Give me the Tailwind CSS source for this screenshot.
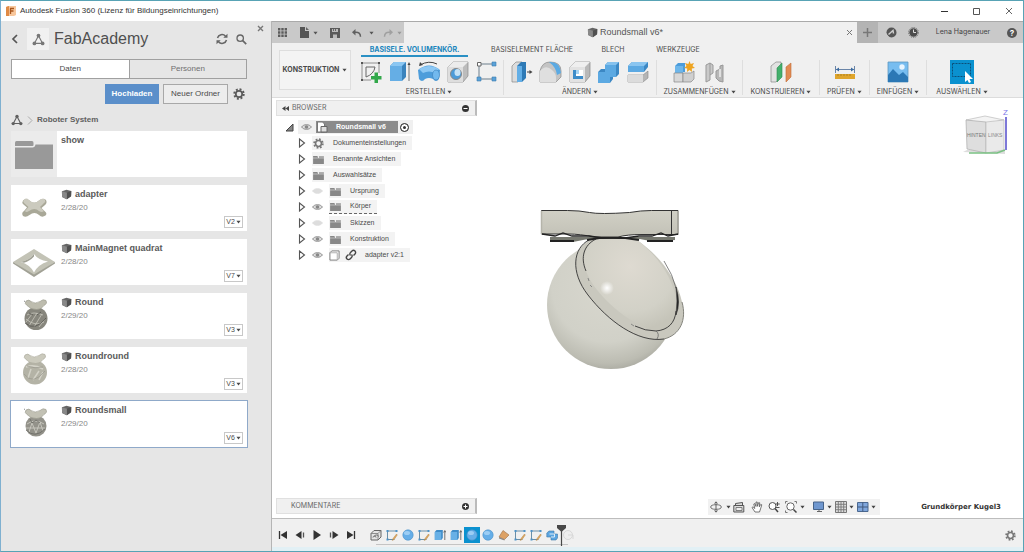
<!DOCTYPE html>
<html lang="de">
<head>
  <meta charset="UTF-8" />
  <meta name="viewport" content="width=device-width, initial-scale=1.0" />
  <title>Autodesk Fusion 360</title>
  <script src="https://cdn.jsdelivr.net/npm/@tailwindcss/browser@4"></script>
</head>
<body class="h-screen flex flex-col overflow-hidden bg-white border border-[#58a3b5] border-l-[#7fb0d0] text-[#4a4a4a] font-['Liberation_Sans',Arial,sans-serif]">

  <!-- Shared icons -->
  <svg class="hidden">
    <symbol id="cube" viewBox="0 0 12 12">
      <path d="M1 2.5 6 .8l5.2 1.4L11 8l-5 3.3L1.2 8.600z" fill="#666" />
      <path d="M1 2.500 6.500 4v7.200L1.200 8.600z" fill="#888" />
      <path d="M6.500 4l4.700-1.800L11 8l-4.500 3.200z" fill="#505050" />
    </symbol>
    <symbol id="folder" viewBox="0 0 12 10">
      <path d="M0 1h4.500l1 1.200V3H0zM0 3.500h12V10H0z" fill="#888" />
      <path d="M6.500 1.500H12V3H6.500z" fill="#888" />
    </symbol>
    <symbol id="eye" viewBox="0 0 12 8">
      <path d="M.6 4C3 .6 9 .6 11.400 4 9 7.400 3 7.400.6 4z" fill="#ddd" stroke="currentColor" />
      <circle cx="6" cy="4" r="2" fill="currentColor" />
    </symbol>
    <symbol id="gear" viewBox="0 0 12 12">
      <circle cx="6" cy="6" r="4.700" fill="none" stroke="currentColor" stroke-width="2" stroke-dasharray="1.900 1.790" />
      <circle cx="6" cy="6" r="3.200" fill="none" stroke="currentColor" stroke-width="1.700" />
    </symbol>
    <symbol id="caret" viewBox="0 0 6 4"><path d="M.5.5h5L3 3.800z" fill="currentColor" /></symbol>
    <symbol id="triangle" viewBox="0 0 12 12">
      <path d="M6 2.500 2.300 9.500h7.400z" fill="none" stroke="currentColor" stroke-width="1.100" />
      <circle cx="6" cy="2.400" r="1.700" fill="currentColor" /><circle cx="2.200" cy="9.600" r="1.700" fill="currentColor" /><circle cx="9.800" cy="9.600" r="1.700" fill="currentColor" />
    </symbol>
    <symbol id="expand" viewBox="0 0 8 10"><path d="M1.500 1v8l5-4z" fill="#fff" stroke="#555" stroke-width="1.100" /></symbol>
    <symbol id="tl-sketch" viewBox="0 0 12 12">
      <path d="M1.500 2h9M1.500 2v8.500h7" fill="none" stroke="#6a8fa8" />
      <path d="M.5 1h2v2h-2zM9.500 1h2v2h-2zM.5 9.500h2v2h-2z" fill="#4d92c8" />
      <path d="M10.500 5 7 9.500l-.7 2 1.800-1 3.200-4.500z" fill="#e0a860" stroke="#a87838" stroke-width=".4" />
    </symbol>
    <symbol id="tl-sphere" viewBox="0 0 12 12">
      <circle cx="6" cy="6" r="5.200" fill="#65aee8" stroke="#4a90c8" stroke-width=".6" />
      <ellipse cx="5" cy="4" rx="3" ry="2" fill="#9bcdf4" />
    </symbol>
    <symbol id="tl-extrude" viewBox="0 0 12 12">
      <path d="M.8 3 2.500 1h6.300v8l-1.600 2H.8z" fill="#3f8cc8" />
      <path d="M.8 3h6.400v8H.8z" fill="#68b0e6" />
      <path d="M10.800 11V2M9.700 3.500l1.100-2 1.100 2" stroke="#555" stroke-width=".8" fill="none" />
    </symbol>
    <symbol id="tl-component" viewBox="0 0 12 12">
      <path d="M1 4.500 4 1.500h7v6.500l-3 3H1z" fill="#e4e4e4" stroke="#666" />
      <path d="M1 4.500h7v6.500M8 4.500l3-3" fill="none" stroke="#777" stroke-width=".8" />
      <path d="M3 8.500c0-2 3-2 3 0M4.500 7.500c0-2 4-2 4 0" stroke="#666" fill="none" />
    </symbol>
    <symbol id="tl-plane" viewBox="0 0 12 12">
      <path d="M1 8 5 1.500l6 4.500-4.500 4.500z" fill="#dda266" stroke="#a87d54" stroke-width=".7" />
      <path d="M1 8v1.500l5.500 2V10.500z" fill="#888" />
    </symbol>
    <symbol id="tl-combine" viewBox="0 0 12 12">
      <path d="M.8 4 3 2h5v3h3.500v4L10 11H5V8H.8z" fill="#5ba5e0" stroke="#4078a8" stroke-width=".6" />
      <path d="M3.500 5h5v3H5" fill="none" stroke="#dcecf8" />
    </symbol>
    <symbol id="tl-ghost" viewBox="0 0 12 12"><circle cx="6" cy="6" r="4.500" fill="#eee" stroke="#d2d2d2" stroke-width=".8" /><path d="M6 6h5v4" stroke="#d8d8d8" fill="none" /></symbol>

    <!-- Part thumbnails -->
    <symbol id="part-adapter" viewBox="0 0 46 46">
      <path d="M12 15.500q3-3 6.500 0 4.500 4.500 9.500 0 4-3 7-.5 1.500 3-1 5l-3.500 3 3.500 3.500q2.500 2 .5 4-3.500 2.500-6.500-.5-4.500-4-9.500 0-3.500 3-6.500 1-2-3 1-5l3-3.500-3.500-3q-2-2-.5-4z" fill="#a9a898" />
      <path d="M13 14.500q2.500-2 5 .5 5.500 5 10.500 0 3-2 5.500-.5 1 2-1.500 4L29 22l4 4q-2 2-5 0-4.500-4-10 0-3 2-4 0l3.500-4-4.500-4q-1.500-1.500 0-3.500z" fill="#cbcabe" />
    </symbol>
    <symbol id="part-magnet" viewBox="0 0 46 46">
      <path d="M2 23 23 10l21 13-21 14zM9.500 23Q19 25.500 23 33.500 27 25.500 37 22.500 27 21 23 15 19 21 9.500 23z" fill="#c3c3b6" fill-rule="evenodd" />
      <path d="M2 23v1.500L23 38l21-13.500V23L23 35.500z" fill="#a1a195" />
      <path d="M9.500 23Q19 21 23 15v2.500Q19 22 13 23.700z" fill="#a0a094" />
    </symbol>
    <symbol id="part-round" viewBox="0 0 46 46">
      <circle cx="25" cy="25.500" r="11.500" fill="#87867d" />
      <path d="M15 8q3-2 5 .5 4 3 9 0 3-3 6-1 2 3-2 5l-3 3q-4 2-10 0l-4-3q-3-2-1-4.500z" fill="#bdbcae" stroke="#99988b" stroke-width=".6" />
      <path d="M16 22q6-4 16 0M15 29l6-8M18 33l8-13M23 34l8-13M28 34l6-8M15 26q9 8 18 3" fill="none" stroke="#c6c5bb" stroke-width=".8" />
      <path d="M14 30q10 9 21-5M18 20l4 2m4 0 4-3" fill="none" stroke="#55544f" stroke-width=".8" />
      <path d="m13 8 1 .5" stroke="#888" />
    </symbol>
    <symbol id="part-roundround" viewBox="0 0 46 46">
      <circle cx="24" cy="25.500" r="12" fill="#b4b3a6" />
      <path d="M14 8q3-2 5 .5 4 3 9 0 3-3 6-1 2 3-2 5l-3 3q-4 2-10 0l-4-3q-3-2-1-4.500z" fill="#cbcabd" stroke="#a9a89b" stroke-width=".6" />
      <path d="M15 20q8-3 17 2M17 31l3-9M22 33l6-9M28 33l4-8" fill="none" stroke="#d3d2c7" stroke-width="1.500" />
      <path d="M13 27q9 12 21-3M16 19q8 3 16 1" fill="none" stroke="#98978c" stroke-width=".7" />
    </symbol>
    <symbol id="part-roundsmall" viewBox="0 0 46 46">
      <circle cx="25" cy="25" r="10.500" fill="#93928a" />
      <path d="M15 9q3-2 5 .5 4 3 9 0 3-3 6-1 2 3-2 5l-3 3q-4 2-10 0l-4-3q-3-2-1-4.500z" fill="#c2c1b4" stroke="#99988b" stroke-width=".6" />
      <path d="M16 23q8-6 17 0M18 31l3-9 4 10 4-11 3 9M15 27h19" fill="none" stroke="#cbcac1" stroke-width=".9" />
      <path d="M15 29q9 9 19-1M19 18l2 4 4-3 4 3" fill="none" stroke="#6a6963" stroke-width=".8" />
      <path d="m13 8 1 .5" stroke="#888" />
    </symbol>
  </svg>

  <!-- Title bar -->
  <header class="h-5 shrink-0 flex items-center pl-[5px] pr-2 bg-white text-[8px] text-[#333]">
    <svg class="size-[10px] mr-1" viewBox="0 0 10 10"><path d="M0 1 2 0h8v9l-2 1H0z" fill="#f8c79c" /><path d="M0 1 3 0v10H0z" fill="#e08a45" /><path d="M4 2.500h4M4.500 2.500V8M4.500 5h3" stroke="#a8561c" stroke-width="1.300" fill="none" /></svg>
    <h1 class="flex-1">Autodesk Fusion 360 (Lizenz für Bildungseinrichtungen)</h1>
    <div class="flex gap-6 mr-[2px]">
      <button aria-label="Minimieren"><svg class="size-2" viewBox="0 0 8 8"><path d="M0 4.500h7" stroke="#333" /></svg></button>
      <button aria-label="Maximieren"><svg class="size-2" viewBox="0 0 8 8"><path d="M.5 1.500h6v6h-6z" fill="none" stroke="#555" /></svg></button>
      <button aria-label="Schließen"><svg class="size-2" viewBox="0 0 8 8"><path d="m1 1 6 6m0-6L1 7" stroke="#555" stroke-width=".9" /></svg></button>
    </div>
  </header>

  <div class="flex-1 min-h-0 flex">

    <!-- Data panel -->
    <aside class="relative w-[271px] shrink-0 bg-[#e6e6e6] border-r border-[#b5b5b5] pl-[10px] pr-6 text-[8px]">
      <button aria-label="Datengruppe schließen" class="absolute right-[7px] top-[4px]"><svg class="size-[7px]" viewBox="0 0 7 7"><path d="m1 1 5 5m0-5L1 6" stroke="#777" stroke-width="1.400" /></svg></button>

      <div class="flex items-center h-8 pt-1">
        <button aria-label="Zurück"><svg class="w-2 h-[10px]" viewBox="0 0 8 10"><path d="M6 1 2 5l4 4" fill="none" stroke="#555" stroke-width="1.700" /></svg></button>
        <span class="ml-2 size-[22px] grid place-items-center bg-[#f1f1f1] text-[#777]"><svg class="size-[13px]"><use href="#triangle" /></svg></span>
        <h2 class="ml-[5px] flex-1 text-[16px] text-[#4f4f4f]">FabAcademy</h2>
        <button aria-label="Aktualisieren"><svg class="size-3" viewBox="0 0 12 12"><path d="M1.500 5a4.600 4.600 0 0 1 8-1.800M10.500 7a4.600 4.600 0 0 1-8 1.800" fill="none" stroke="#666" stroke-width="1.500" /><path d="M11.500.8v4H7.300zM.5 11.200v-4h4.200z" fill="#666" /></svg></button>
        <button aria-label="Suchen" class="ml-2"><svg class="size-[11px]" viewBox="0 0 11 11"><circle cx="4.200" cy="4.200" r="3.200" fill="none" stroke="#666" stroke-width="1.300" /><path d="m6.700 6.700 3.500 3.500" stroke="#666" stroke-width="1.700" /></svg></button>
      </div>

      <div class="mt-[6px] flex h-5 border border-[#a0a0a0]">
        <button class="flex-1 bg-white border-r border-[#a0a0a0]">Daten</button>
        <button class="flex-1 text-[#707070]">Personen</button>
      </div>

      <div class="mt-[5px] flex justify-end items-center h-5">
        <button class="h-5 w-[54px] bg-[#5b8fca] text-white font-bold">Hochladen</button>
        <button class="ml-1 h-5 w-[65px] border border-[#a8a8a8] bg-[#ededed]">Neuer Ordner</button>
        <button aria-label="Einstellungen" class="ml-[5px] mr-[2px]"><svg class="size-3 text-[#5a5a5a]"><use href="#gear" /></svg></button>
      </div>

      <nav class="mt-2 flex items-center h-4 gap-1 font-bold text-[#606060]">
        <svg class="size-[12px]"><use href="#triangle" /></svg>
        <svg class="w-[6px] h-[9px]" viewBox="0 0 6 9"><path d="m1 .5 4 4-4 4" fill="none" stroke="#aaa" /></svg>
        <a href="#">Roboter System</a>
      </nav>

      <ul id="fileList" class="mt-[3px] flex flex-col gap-2">
        <li class="h-[46px] flex bg-white">
          <span class="w-[46px] grid place-items-center bg-[#ebebeb]">
            <svg class="w-[38px] h-[29px]" viewBox="0 0 38 29"><path d="M0 5V2.500Q0 1 1.500 1H17q1.500 0 1.500 2v2q0 1-1 1H0z" fill="#999" /><path d="M0 7.500h17.500Q20 7.500 20.500 4.500H38V29H0z" fill="#999" /></svg>
          </span>
          <a href="#" class="pl-1 pt-[3px] text-[9px] font-bold text-[#5a5a5a]">show</a>
        </li>
      </ul>
    </aside>

    <main class="flex-1 min-w-0 flex flex-col">

      <!-- Document tabs -->
      <div class="h-[22px] shrink-0 flex bg-[#c9c9c9] border-t border-[#aaa] text-[#555]">
        <div class="w-[132px] flex items-center pl-[6px]">
          <button aria-label="Datengruppe"><svg class="size-[9px]" viewBox="0 0 9 9"><path d="M0 0h2.400v2.400H0zM3.300 0h2.400v2.400H3.300zM6.600 0H9v2.400H6.600zM0 3.300h2.400v2.400H0zM3.300 3.300h2.400v2.400H3.300zM6.600 3.300H9v2.400H6.600zM0 6.600h2.400V9H0zM3.300 6.600h2.400V9H3.300zM6.600 6.600H9V9H6.600z" fill="#5c5c5c" /></svg></button>
          <button aria-label="Datei" class="ml-[13px] flex items-center gap-1"><svg class="w-[9px] h-[11px]" viewBox="0 0 9 11"><path d="M0 0h5v4h4v7H0z" fill="#555" /><path d="M6 0l3 3H6z" fill="#666" /></svg><svg class="w-[5px] h-1"><use href="#caret" /></svg></button>
          <button aria-label="Speichern" class="ml-3"><svg class="size-[10px]" viewBox="0 0 10 10"><path d="M0 0h10v10H0z" fill="#5a5a5a" /><path d="M2 1h6v3H2zM3 6.500h4V10H3z" fill="#bbb" /><path d="M3.500 1v2M5.500 1v2" stroke="#666" /></svg></button>
          <button aria-label="Rückgängig" class="ml-3 flex items-center gap-[7px]"><svg class="w-[10px] h-[10px]" viewBox="0 0 10 10"><path d="M3.500 1v6.500L0 4.200z" fill="#606060" /><path d="M3 4.200q5.500-.5 5.500 4.500" fill="none" stroke="#606060" stroke-width="1.500" /></svg><svg class="w-[5px] h-1"><use href="#caret" /></svg></button>
          <button aria-label="Wiederherstellen" class="ml-[9px] flex items-center gap-1 text-[#999]"><svg class="w-[10px] h-[10px]" viewBox="0 0 10 10"><path d="M6.500 1v6.500L10 4.200z" fill="#a0a0a0" /><path d="M7 4.200q-5.500-.5-5.500 4.500" fill="none" stroke="#a0a0a0" stroke-width="1.500" /></svg><svg class="w-[5px] h-1"><use href="#caret" /></svg></button>
        </div>
        <div class="flex-1 flex items-center bg-[#f0f0f0] pr-1">
          <a href="#" class="flex-1 flex items-center justify-center gap-[2px] text-[9px]"><svg class="size-[11px]"><use href="#cube" /></svg>Roundsmall v6*</a>
          <button aria-label="Tab schließen"><svg class="size-[7px]" viewBox="0 0 7 7"><path d="m1 1 5 5m0-5L1 6" stroke="#777" /></svg></button>
        </div>
        <button aria-label="Neuer Tab" class="w-[21px] grid place-items-center bg-[#b4b4b4]"><svg class="size-[9px]" viewBox="0 0 9 9"><path d="M4.500 0v9M0 4.500h9" stroke="#777" stroke-width="1.500" /></svg></button>
        <div class="w-[145px] flex items-center pl-2 pr-[6px] font-['Inter',sans-serif] text-[7px] text-[#444]">
          <button aria-label="Erweiterungen"><svg class="size-[11px]" viewBox="0 0 11 11"><circle cx="5.500" cy="5.500" r="5" fill="#555" /><path d="M2.500 7.500 7 3.500l.5 3" stroke="#ccc" stroke-width="1.500" fill="none" /><path d="m0 6 3 4-3 1z" fill="#c9c9c9" /></svg></button>
          <button aria-label="Auftragsstatus" class="ml-[11px]"><svg class="size-[11px]" viewBox="0 0 11 11"><circle cx="5.500" cy="5.500" r="4.200" fill="#4c4c4c" /><circle cx="5.500" cy="5.500" r="5" fill="none" stroke="#666" stroke-dasharray="1.300 1" stroke-width=".8" /><path d="M5.500 2.500v3H8" stroke="#ddd" fill="none" /></svg></button>
          <button class="flex-1 text-center">Lena Hagenauer</button>
          <button aria-label="Hilfe" class="size-[10px] rounded-full bg-[#555] text-white font-bold text-[8px] leading-[10px]">?</button>
        </div>
      </div>

      <!-- Ribbon -->
      <div class="h-[55px] shrink-0 flex bg-[#f0f0f0] border-b border-[#dcdcdc] font-['Inter',sans-serif] text-[7px]">
        <div class="w-[83px] pl-[7px] pt-[7px]">
          <button class="w-[72px] h-10 flex items-center justify-center gap-[3px] border border-[#dedede] bg-[#f4f4f4] font-bold">KONSTRUKTION<svg class="w-[5px] h-1"><use href="#caret" /></svg></button>
        </div>
        <div class="flex-1 min-w-0 flex flex-col">
          <nav class="flex h-[14px] pl-[6px] items-stretch text-center leading-[14px]">
            <a href="#" class="w-[107px] border-b-2 border-[#2a90c4] text-[#1c86bd] font-bold">BASISELE. VOLUMENKÖR.</a>
            <a href="#" class="w-32">BASISELEMENT FLÄCHE</a>
            <a href="#" class="w-[34px]">BLECH</a>
            <a href="#" class="w-24">WERKZEUGE</a>
          </nav>
          <div class="flex-1 flex pt-[3px] pb-[2px]">
            <div class="w-[149px] flex flex-col items-center justify-between border-r border-[#dedede]">
              <div class="flex gap-[5px]">
                <button aria-label="Skizze erstellen"><svg class="size-6" viewBox="0 0 24 24"><path d="M2 3h18M3 2v18h9M20 2v11" fill="none" stroke="#777" stroke-width=".8" /><path d="M7 7v10M7 7h9M16 7q-1 7-9 10" fill="none" stroke="#666" /><path d="M2 2h2v2H2zM19 2h2v2h-2zM2 19h2v2H2z" fill="#555" /><path d="M15.500 12.500h3.500V16h3.500v3.500H19V23h-3.500v-3.500H12V16h3.500z" fill="#32a84a" /></svg></button>
                <button aria-label="Extrusion"><svg class="size-6" viewBox="0 0 24 24"><path d="m2 6 4-4h12v15l-4 4H2z" fill="#3a83bd" /><path d="M2 6h12v15H2z" fill="#65aee5" /><path d="m2 6 4-4h12l-4 4z" fill="#8ac6f2" /><path d="M21 21V4" stroke="#777" /><path d="m21 2 1.500 3h-3z" fill="#444" /></svg></button>
                <button aria-label="Drehen"><svg class="size-6" viewBox="0 0 24 24"><path d="M1 10Q12 1 23 10l-1 9q-3 4-6 0-4-2-8 0-3 4-6 0z" fill="#4d9ddb" /><path d="M2 9Q12 3 22 9l-4 4q-6-3-12 0z" fill="#8dc8f4" /><ellipse cx="19" cy="15" rx="3.500" ry="5" fill="#72b9ee" stroke="#3d80b8" stroke-width=".6" /><path d="M3 5q9-5 17-1" fill="none" stroke="#444" /><path d="m2 6 1-4 3 3z" fill="#444" /></svg></button>
                <button aria-label="Bohrung"><svg class="size-6" viewBox="0 0 24 24"><path d="m2 7 5-5h15v14l-5 6H2z" fill="#bcbcbc" stroke="#8a8a8a" stroke-width=".7" /><path d="M2 7h15v15H2z" fill="#dedede" /><path d="m2 7 5-5h15l-5 5z" fill="#ececec" /><circle cx="10" cy="14" r="5.500" fill="#4d9bd8" stroke="#888" /><ellipse cx="11.500" cy="12.500" rx="3" ry="3.500" fill="#c5e2f6" /></svg></button>
                <button aria-label="Muster"><svg class="size-6" viewBox="0 0 24 24"><path d="M4 4h15M4 4v15h15" fill="none" stroke="#6d7f8c" /><path d="M2.500 2.500H6V6H2.500z" fill="#fff" stroke="#666" /><path d="M17 2h4v4h-4zM2 17h4v4H2zM17 17h4v4h-4z" fill="#5aa2d8" stroke="#3c7cae" stroke-width=".6" /></svg></button>
              </div>
              <button class="flex items-center gap-[2px] leading-none">ERSTELLEN<svg class="w-[5px] h-1"><use href="#caret" /></svg></button>
            </div>
            <div class="w-[153px] flex flex-col items-center justify-between border-r border-[#dedede]">
              <div class="flex gap-[5px]">
                <button aria-label="Drücken/Ziehen"><svg class="size-6" viewBox="0 0 24 24"><path d="m2 6 4-4h6v16l-4 4H2z" fill="#dcdcdc" stroke="#888" stroke-width=".7" /><path d="M7 6l4-4h5v16l-4 4H7z" fill="#2e7ab6" /><path d="M7 6h5v16H7z" fill="#62aee6" /><path d="M17 12h3" stroke="#444" /><path d="m22.500 12-3-2v4z" fill="#444" /></svg></button>
                <button aria-label="Abrunden"><svg class="size-6" viewBox="0 0 24 24"><path d="M1 21V11Q3 2 11 2q11 0 11 9v6l-5 5H1z" fill="#c4c4c4" stroke="#888" stroke-width=".7" /><path d="M1 22V11q6-7 12-1 4 3 4 8v4z" fill="#dfdfdf" /><path d="M10 2q11-1 12 11l-4 2q-1-8-8-13z" fill="#5baae3" /></svg></button>
                <button aria-label="Schale"><svg class="size-6" viewBox="0 0 24 24"><path d="m2 7 5-5h15v14l-5 6H2z" fill="#b9b9b9" stroke="#888" stroke-width=".7" /><path d="M2 7h15v15H2z" fill="#e2e2e2" /><path d="m2 7 5-5h15l-5 5z" fill="#efefef" /><path d="M5 10h10v9H5z" fill="#fff" /><path d="M5 10h3v6h7v3H5z" fill="#3c8cc9" /><path d="M8 10h3v4H8z" fill="#a5d3f3" /></svg></button>
                <button aria-label="Kombinieren"><svg class="size-6" viewBox="0 0 24 24"><path d="m8 5 3-3h11v12l-3 3h-3v2l-3 4H1V12l3-3h4z" fill="#3c88c4" /><path d="M8 5h11v12h-6v6H1V12h7z" fill="#5ca9e2" /><path d="m8 5 3-3h11l-3 3z" fill="#86c2ee" /></svg></button>
                <button aria-label="Fläche versetzen"><svg class="size-6" viewBox="0 0 24 24"><path d="m2 6 4-4h16v5l-4 5H2z" fill="#3c88c4" /><path d="M2 6h16v6H2z" fill="#5ca9e2" /><path d="m2 6 4-4h16l-4 4z" fill="#8ac5f0" /><path d="M2 15h15l5-4v7l-5 4H2z" fill="#b5b5b5" stroke="#888" stroke-width=".6" /><path d="M2 15h15v7H2z" fill="#dcdcdc" /></svg></button>
              </div>
              <button class="flex items-center gap-[2px] leading-none">ÄNDERN<svg class="w-[5px] h-1"><use href="#caret" /></svg></button>
            </div>
            <div class="w-[86px] flex flex-col items-center justify-between border-r border-[#dedede]">
              <div class="flex gap-[7px]">
                <button aria-label="Neue Komponente"><svg class="size-6" viewBox="0 0 24 24"><path d="m3 6 3-3h7v9H3z" fill="#4b9cdb" /><path d="M3 6h8v7H3z" fill="#6db6ea" /><path d="M2 13h9v9H2z" fill="#d8d8d8" stroke="#888" stroke-width=".7" /><path d="M11 13h8l3-2v8l-3 3h-8z" fill="#cfcfcf" stroke="#888" stroke-width=".7" /><path d="m17.500 1 1.200 3 3.300-1-1.500 3 2.500 2-3.200.5.200 3.500-2.500-2-2.500 2 .2-3.500L12 8l2.500-2L13 3l3.300 1z" fill="#eea421" /></svg></button>
                <button aria-label="Verbindung"><svg class="size-6" viewBox="0 0 24 24"><path d="M3 5l4-2 3 2v8l-3 2v5l-4 2z" fill="#c9c9c9" stroke="#999" /><path d="M7 3v12" stroke="#999" /><path d="M20 5v17l-4-1-3-3v-7l4-2V6z" fill="#b7b7b7" stroke="#999" /><path d="M17 9v8" stroke="#eee" stroke-width="1.500" /></svg></button>
              </div>
              <button class="flex items-center gap-[2px] leading-none">ZUSAMMENFÜGEN<svg class="w-[5px] h-1"><use href="#caret" /></svg></button>
            </div>
            <div class="w-[77px] flex flex-col items-center justify-between border-r border-[#dedede]">
              <button aria-label="Versatzebene"><svg class="size-6" viewBox="0 0 24 24"><path d="m2 6 5-4h5v15l-5 5H2z" fill="#e2e2e2" stroke="#888" stroke-width=".7" /><path d="m8 8 5-5v14l-5 5z" fill="#43b06c" stroke="#2f8a50" stroke-width=".6" /><path d="m17 7 5-4v14l-5 5z" fill="#e28a53" stroke="#c06c38" stroke-width=".6" /></svg></button>
              <button class="flex items-center gap-[2px] leading-none">KONSTRUIEREN<svg class="w-[5px] h-1"><use href="#caret" /></svg></button>
            </div>
            <div class="w-[50px] flex flex-col items-center justify-between border-r border-[#dedede]">
              <button aria-label="Messen"><svg class="size-6" viewBox="0 0 24 24"><path d="M2.500 6v7M21.500 6v7M3 9.500h18" stroke="#6a85a8" /><path d="m3 9.500 3-2v4zM21 9.500l-3-2v4z" fill="#3c6ba0" /><path d="M2 14h20v5H2z" fill="#dfa52c" /><path d="M5 14v2M8 14v2M11 14v2M14 14v2M17 14v2" stroke="#99701b" stroke-width=".7" /></svg></button>
              <button class="flex items-center gap-[2px] leading-none">PRÜFEN<svg class="w-[5px] h-1"><use href="#caret" /></svg></button>
            </div>
            <div class="w-[57px] flex flex-col items-center justify-between border-r border-[#dedede]">
              <button aria-label="Bild einfügen"><svg class="size-6" viewBox="0 0 24 24"><path d="M2 2h20v20H2z" fill="#77bdf0" stroke="#5e97bf" stroke-width=".8" /><path d="m2 15 5-6 6 6 4-3 5 5v5H2z" fill="#2c78b5" /><circle cx="16" cy="7" r="2.700" fill="#e8f5ff" /></svg></button>
              <button class="flex items-center gap-[2px] leading-none">EINFÜGEN<svg class="w-[5px] h-1"><use href="#caret" /></svg></button>
            </div>
            <div class="w-[70px] flex flex-col items-center justify-between">
              <button aria-label="Auswählen"><svg class="size-6" viewBox="0 0 24 24"><path d="M0 0h24v24H0z" fill="#0a91cf" /><path d="M2.500 3.500h18v13h-18z" fill="none" stroke="#0b4f78" stroke-dasharray="2 1" /><path d="M15 11v11l2.500-2 1.500 3 2-1-1.500-3H23z" fill="#fff" /></svg></button>
              <button class="flex items-center gap-[2px] leading-none">AUSWÄHLEN<svg class="w-[5px] h-1"><use href="#caret" /></svg></button>
            </div>
          </div>
        </div>
      </div>

      <!-- Canvas -->
      <section class="flex-1 min-h-0 relative bg-white">
        <svg class="absolute left-[258px] top-[102px] w-[170px] h-[180px]" viewBox="0 0 170 180">
          <defs>
            <radialGradient id="ball" cx=".47" cy=".36" r=".66"><stop offset="0" stop-color="#d8d7ce" /><stop offset=".65" stop-color="#d1d1c8" /><stop offset=".9" stop-color="#bcbcb2" /><stop offset="1" stop-color="#aaaaa1" /></radialGradient>
            <radialGradient id="cap" cx=".5" cy=".3" r=".7"><stop offset="0" stop-color="#dedad1" /><stop offset=".7" stop-color="#d2d1c7" /><stop offset="1" stop-color="#c5c4b9" /></radialGradient>
            <radialGradient id="shine"><stop offset="0" stop-color="#fff" /><stop offset="1" stop-color="#fff" stop-opacity="0" /></radialGradient>
            <linearGradient id="plate" x1="0" x2="0" y1="0" y2="1"><stop offset="0" stop-color="#d1d0c6" /><stop offset="1" stop-color="#c2c1b6" /></linearGradient>
          </defs>
          <circle cx="81" cy="105" r="64" fill="url(#ball)" />
          <path d="M60 40C43 48 40 72 58 95c20 26 50 48 76 44 16-4 23-19 18-37-4-20-20-45-45-62z" fill="#c9c8be" />
          <path d="M66 39c-14 7-16 25-4 44 12 18 38 42 64 48 16-1 22-14 20-31-3-22-18-44-40-61z" fill="url(#cap)" />
          <path d="M59 40C43 48 40 72 58 95c20 26 50 48 76 44" fill="none" stroke="#333" stroke-width=".9" />
          <path d="M134 139c16-4 23-19 18-37" fill="none" stroke="#77776f" stroke-width=".9" />
          <path d="M66 39c-12 6-16 18-10 32M105 126q10 5 21 5c12-1 19-8 20-20" fill="none" stroke="#333" stroke-width=".9" />
          <path d="M126 131q4 3 1 8M134 61q9 14 12 27" fill="none" stroke="#666" stroke-width=".8" />
          <path d="M146 87q2 14 0 28 5-12 0-28z" fill="#222" stroke="#333" stroke-width=".7" />
          <path d="m58 78 1 3m1 4 2 2m39 37 3 2" stroke="#777" stroke-width=".8" />
          <circle cx="77" cy="88" r="7" fill="url(#shine)" />
          <path d="M20 37h125v3l-20 2-15-3H58l-15 3-23-1z" fill="#777970" />
          <path d="M20 41h24M117 41h26M57 40q24-5 52 0" stroke="#222" stroke-width="2" fill="none" />
          <path d="M11.500 10.500h26q12 0 22 2t40 0q11-2 22-2h26.500v24H112q-15 0-24 2.500H65q-16-3-26-3H11.500z" fill="url(#plate)" stroke="#333" />
          <path d="M11.500 11v23M148 11v23" stroke="#b5b4aa" stroke-width="1.500" />
          <path d="M141.500 11v23" stroke="#333" />
          <path d="m12 34 13 2 8-3 9 3 17 0 14 2h22l14-2 13 0 9-3 7 3 10-2" fill="none" stroke="#222" stroke-width="1.300" />
        </svg>

        <!-- View cube -->
        <svg class="absolute right-[8px] top-[6px] w-14 h-[52px]" viewBox="0 0 56 52">
          <path d="M4 48l42 2V46H8z" fill="#ddd" />
          <path d="M7 16 26 12l19 4-19 4z" fill="#f4f4f4" stroke="#bbb" stroke-width=".7" />
          <path d="M7 16 27 18v31L8 45z" fill="#dedede" stroke="#aaa" stroke-width=".7" />
          <path d="M27 18 45 16v30l-18 3z" fill="#eaeaea" stroke="#bbb" stroke-width=".7" />
          <path d="M10 49h28l8-3" stroke="#79c183" fill="none" stroke-width="1.500" />
          <path d="M47 13v33" stroke="#7d78d8" stroke-width="2" />
          <text x="8" y="33" font-size="5" fill="#777" font-family="Liberation Sans">HINTEN</text>
          <text x="29" y="33" font-size="5" fill="#888" font-family="Liberation Sans">LINKS</text>
          <text x="44" y="11" font-size="8" fill="#7d78e8" font-family="Liberation Sans">Z</text>
        </svg>

        <!-- Browser -->
        <div class="absolute left-1 top-[2px] w-[201px] text-[7px]">
          <div class="h-4 flex items-center bg-[#f0f0f0] border border-[#e0e0e0] border-r-2 border-r-[#bbb] pl-[5px] font-['Inter',sans-serif] text-[#666]">
            <svg class="w-[7px] h-[5px] mr-[2px]" viewBox="0 0 7 5"><path d="M3.500 0v5L0 2.500zM7 0v5L3.500 2.500z" fill="#444" /></svg>
            <h2 class="flex-1 pl-[1px]">BROWSER</h2>
            <button aria-label="Browser minimieren"><svg class="size-[7px] mr-[6px]" viewBox="0 0 7 7"><circle cx="3.500" cy="3.500" r="3.500" fill="#333" /><path d="M1.500 3.500h4" stroke="#fff" /></svg></button>
          </div>
          <ul id="browserTree" class="pt-[3px]">
            <li class="h-4 flex items-center pl-[9px]">
              <svg class="size-[9px] mr-1" viewBox="0 0 9 9"><path d="M8 1v7H1z" fill="#888" stroke="#444" /></svg>
              <span class="h-[14px] flex items-center bg-[#f0f0f0] pl-[3px] text-[#888]">
                <svg class="w-[11px] h-2 mr-1"><use href="#eye" /></svg>
                <span class="h-3 w-[82px] flex items-center bg-[#8b8b8b] text-white font-bold">
                  <svg class="size-3 mr-2" viewBox="0 0 12 12"><path d="M1.500 1h5l2 2v8h-7z" fill="#fff" stroke="#777" /><path d="M5 5.500h6V11H5z" fill="#ddd" stroke="#666" /></svg>Roundsmall v6</span>
                <label class="ml-[2px] mr-1 flex"><input type="radio" name="active" checked aria-label="Komponente aktivieren" class="size-[9px] appearance-none rounded-full border border-[#444] bg-white checked:bg-[#333] checked:border-[#444] checked:shadow-[inset_0_0_0_2px_white]" /></label>
              </span>
            </li>
          </ul>
        </div>

        <!-- Comments -->
        <div class="absolute left-1 bottom-1 w-[201px] h-4 flex items-center bg-[#f0f0f0] border border-[#e0e0e0] border-r-2 border-r-[#bbb] pl-[14px] font-['Inter',sans-serif] text-[7px] text-[#666]">
          <h2 class="flex-1">KOMMENTARE</h2>
          <button aria-label="Kommentare öffnen"><svg class="size-[7px] mr-[6px]" viewBox="0 0 7 7"><circle cx="3.500" cy="3.500" r="3.500" fill="#333" /><path d="M1.500 3.500h4M3.500 1.500v4" stroke="#fff" /></svg></button>
        </div>

        <!-- Navigation bar -->
        <div class="absolute right-[143px] bottom-[3px] w-[172px] h-4 flex items-center bg-[#f1f1f1] pl-[2px] text-[#444]">
          <button aria-label="Orbit" class="flex items-center gap-1"><svg class="size-3" viewBox="0 0 12 12"><ellipse cx="6" cy="6" rx="5.300" ry="2.300" fill="none" stroke="#666" stroke-width=".9" /><path d="M6 1v10M4.500 2.500 6 .8l1.500 1.700M4.500 9.500 6 11.200l1.500-1.700" stroke="#555" fill="none" stroke-width=".9" /></svg><svg class="w-[5px] h-1"><use href="#caret" /></svg></button>
          <button aria-label="Ausrichten" class="ml-[2px]"><svg class="size-3" viewBox="0 0 12 12"><path d="M.8 4.500h10v6.500H.8zM2.500 4.500v-2l7-1v3" fill="#ddd" stroke="#555" /><path d="M3 6.500h6v3H3z" fill="#eee" stroke="#666" stroke-width=".8" /></svg></button>
          <button aria-label="Pan" class="ml-[6px]"><svg class="size-3" viewBox="0 0 12 12"><path d="M4 11 1 6.500l1-.7 1.800 1.700L2.800 3l1-.5L5 5.500V1h1.200l.3 4.300L7.700 1.500l1 .3-.4 4 1.500-2.500 1 .5L9.500 8 8.500 11z" fill="#fff" stroke="#555" stroke-width=".8" /></svg></button>
          <button aria-label="Zoom" class="ml-[5px]"><svg class="size-3" viewBox="0 0 12 12"><circle cx="4.500" cy="5" r="3.500" fill="#fff" stroke="#555" /><path d="m7 7.500 3 3.500" stroke="#444" stroke-width="1.500" /><path d="M9.500 1v4M7.700 3h4M8 6.500h3.500" stroke="#444" stroke-width=".9" /></svg></button>
          <button aria-label="Einpassen" class="ml-[5px] flex items-center gap-[3px]"><svg class="size-3" viewBox="0 0 12 12"><path d="M.5 2.500v-2h2M9.500.5h2v2M.5 9.500v2h2" stroke="#777" fill="none" /><circle cx="5.500" cy="5.500" r="3.700" fill="#fff" stroke="#666" /><path d="m8.500 8.500 3 3" stroke="#444" stroke-width="1.500" /></svg><svg class="w-[5px] h-1"><use href="#caret" /></svg></button>
          <button aria-label="Anzeigeeinstellungen" class="ml-2 flex items-center gap-[2px]"><svg class="size-3" viewBox="0 0 12 12"><path d="M.5 1h10v7.500H.5z" fill="#6f97cf" stroke="#466389" /><path d="M4 10.500h5M6 9v2" stroke="#666" /></svg><svg class="w-[5px] h-1"><use href="#caret" /></svg></button>
          <button aria-label="Raster" class="ml-[3px] flex items-center gap-[2px]"><svg class="size-3" viewBox="0 0 12 12"><path d="M.5.500h11v11H.5z" fill="#ddd" stroke="#777" /><path d="M3.300 0v12M6 0v12M8.700 0v12M0 3.300h12M0 6h12M0 8.700h12" stroke="#777" stroke-width=".9" /></svg><svg class="w-[5px] h-1"><use href="#caret" /></svg></button>
          <button aria-label="Ansichtsfenster" class="ml-[3px] flex items-center gap-[2px]"><svg class="size-3" viewBox="0 0 12 12"><path d="M.5 1.500h10.500v9H.5z" fill="#7fa6dc" stroke="#4b6890" /><path d="M5.800 1.500v9M.5 6H11" stroke="#40597d" /></svg><svg class="w-[5px] h-1"><use href="#caret" /></svg></button>
        </div>
        <p class="absolute right-[22px] bottom-[5px] font-['DejaVu_Sans',sans-serif] text-[7px] leading-3 font-bold text-[#333]">Grundkörper Kugel3</p>
      </section>

      <!-- Timeline -->
      <footer class="h-[33px] shrink-0 flex bg-[#f0f0f0] border-t border-[#bdbdbd] border-b-4 border-b-[#e2f0f5] pl-[5px] pr-[7px]">
        <div class="flex items-center gap-[5px] pt-1">
          <button aria-label="Zum Anfang"><svg class="size-3" viewBox="0 0 12 12"><path d="M2.500 2v8" stroke="#333" stroke-width="1.300" /><path d="M10 2v8L3.500 6z" fill="#333" /></svg></button>
          <button aria-label="Schritt zurück"><svg class="size-3" viewBox="0 0 12 12"><path d="M7.500 2v8L1.500 6z" fill="#333" /><path d="M9.500 3.500v5" stroke="#555" stroke-width="1.300" /></svg></button>
          <button aria-label="Wiedergabe"><svg class="size-3" viewBox="0 0 12 12"><path d="M2.500 1v10L10 6z" fill="#333" /></svg></button>
          <button aria-label="Schritt vor"><svg class="size-3" viewBox="0 0 12 12"><path d="M4.500 2v8l6-4z" fill="#333" /><path d="M2.500 3.500v5" stroke="#555" stroke-width="1.300" /></svg></button>
          <button aria-label="Zum Ende"><svg class="size-3" viewBox="0 0 12 12"><path d="M2 2v8l6.500-4z" fill="#333" /><path d="M9.500 2v8" stroke="#333" stroke-width="1.300" /></svg></button>
        </div>
        <div class="relative ml-[11px] pt-2">
          <ol id="timeline" class="flex"></ol>
          <div class="mx-2 mt-px border-b border-[#c4c4c4]"></div>
          <svg class="absolute right-[10px] top-[6px] w-[9px] h-[21px]" viewBox="0 0 9 21"><path d="M0 0h9v3L5 6.500H4L0 3z" fill="#484848" /><path d="M4.500 5v16" stroke="#484848" stroke-width="1.200" /></svg>
        </div>
        <button aria-label="Timeline-Einstellungen" class="ml-auto pt-1"><svg class="size-[11px] text-[#777]"><use href="#gear" /></svg></button>
      </footer>
    </main>
  </div>

  <script>
    const files = [
      { name: 'adapter', date: '2/28/20', version: 'V2', part: 'adapter' },
      { name: 'MainMagnet quadrat', date: '2/28/20', version: 'V7', part: 'magnet' },
      { name: 'Round', date: '2/29/20', version: 'V3', part: 'round' },
      { name: 'Roundround', date: '2/28/20', version: 'V3', part: 'roundround' },
      { name: 'Roundsmall', date: '2/29/20', version: 'V6', part: 'roundsmall', selected: true },
    ];

    const nodes = [
      { name: 'Dokumenteinstellungen', icon: 'gear' },
      { name: 'Benannte Ansichten', icon: 'folder' },
      { name: 'Auswahlsätze', icon: 'folder' },
      { name: 'Ursprung', icon: 'folder', eye: 'off' },
      { name: 'Körper', icon: 'folder', eye: 'on', marked: true },
      { name: 'Skizzen', icon: 'folder', eye: 'off' },
      { name: 'Konstruktion', icon: 'folder', eye: 'on' },
      { name: 'adapter v2:1', icon: 'link', eye: 'on' },
    ];

    const steps = ['component', 'sketch', 'sphere', 'sketch', 'extrude', 'extrude', 'sphere', 'sphere', 'plane', 'sketch', 'sketch', 'combine', 'ghost'];
    const activeStep = 6;

    const fileList = document.getElementById('fileList');
    files.forEach(file => {
      const li = document.createElement('li');
      li.className = file.selected
        ? 'h-[46px] flex bg-white outline outline-[#8fa9c9]'
        : 'h-[46px] flex bg-white';
      li.innerHTML = `
        <svg class="size-[46px]"><use href="#part-${file.part}" /></svg>
        <div class="flex-1 pl-1 pt-[3px]">
          <a href="#" class="flex items-center gap-[3px] text-[9px] leading-3 font-bold text-[#5a5a5a]"><svg class="size-[11px]"><use href="#cube" /></svg>${file.name}</a>
          <p class="leading-4 text-[#888]">${file.date}</p>
        </div>
        <button class="self-end mb-[3px] mr-1 w-[19px] h-3 flex items-center justify-center gap-px border border-[#c8c8c8] text-[7px]">${file.version}<svg class="w-[5px] h-1"><use href="#caret" /></svg></button>
      `;
      fileList.appendChild(li);
    });

    const eyes = {
      on: '<svg class="w-[11px] h-2 mr-[6px] text-[#888]"><use href="#eye" /></svg>',
      off: '<svg class="w-[11px] h-2 mr-[6px] text-[#ddd]"><use href="#eye" /></svg>',
    };
    const icons = {
      gear: '<svg class="size-[11px] mx-px text-[#777]"><use href="#gear" /></svg>',
      folder: '<svg class="w-[11px] h-[9px] mx-px"><use href="#folder" /></svg>',
      link: `<svg class="size-[11px] mr-[5px]" viewBox="0 0 12 12"><path d="M1 3l2-2h8v8l-2 2H1z" fill="#fff" stroke="#777" /><path d="M1 3h8v8" stroke="#aaa" fill="none" /></svg>
        <svg class="size-3" viewBox="0 0 12 12"><path d="M5.500 6.500a2 2 0 0 1 0-3L7 2a2 2 0 0 1 3 3L8.500 6.500M6.500 5.500a2 2 0 0 1 0 3L5 10a2 2 0 0 1-3-3l1.500-1.500" fill="none" stroke="#444" stroke-width="1.400" /></svg>`,
    };

    const browserTree = document.getElementById('browserTree');
    nodes.forEach(node => {
      const li = document.createElement('li');
      li.className = 'h-4 flex items-center pl-[22px]';
      const label = node.marked
        ? 'h-[14px] flex items-center bg-[#f3f3f3] pr-[6px] border-b border-dashed border-[#666]'
        : 'h-[14px] flex items-center bg-[#f3f3f3] pr-[6px]';
      li.innerHTML = `
        <svg class="w-2 h-[10px] mr-[2px]"><use href="#expand" /></svg>
        <span class="flex items-center pl-1">${node.eye ? eyes[node.eye] : ''}
          <span class="${label}">${icons[node.icon]}<span class="ml-2">${node.name}</span></span>
        </span>
      `;
      browserTree.appendChild(li);
    });

    const timeline = document.getElementById('timeline');
    steps.forEach((step, i) => {
      const li = document.createElement('li');
      li.className = i === activeStep
        ? 'size-4 grid place-items-center bg-[#0a91cf]'
        : 'size-4 grid place-items-center';
      li.innerHTML = `<svg class="size-3"><use href="#tl-${step}" /></svg>`;
      timeline.appendChild(li);
    });
  </script>
</body>
</html>
